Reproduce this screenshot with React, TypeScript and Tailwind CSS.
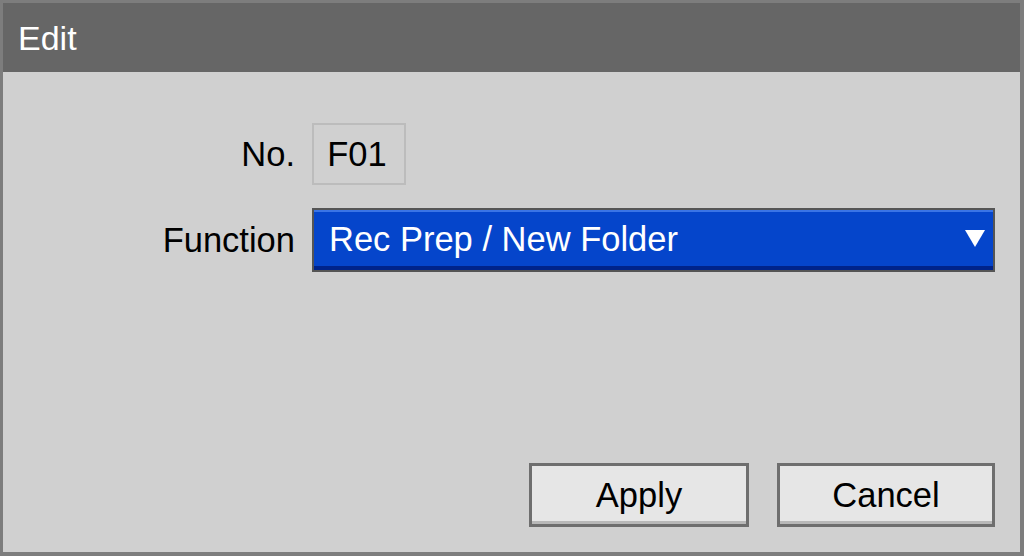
export default function App() {
  return (
    <div
      className="w-[1024px] h-[556px] flex flex-col bg-[#d0d0d0] border-t-[3px] border-l-[3px] border-r-4 border-b-4 border-[#7d7d7d] text-[34.5px] leading-none text-black"
      style={{ fontFamily: '"Liberation Sans", Arial, sans-serif' }}
    >
      <div className="h-[69px] flex items-center pl-[15px] bg-[#666666] text-white text-[34px]">Edit</div>

      <div className="flex-1 flex flex-col pt-[51px] pr-[25px] pb-[25px]">
        <div className="flex items-center h-[62px]">
          <div className="w-[292px] text-right">No.</div>
          <div className="ml-[17px] w-[94px] h-[62px] flex items-center justify-center border-2 border-[#bcbcbc] pr-[4px]">
            F01
          </div>
        </div>

        <div className="flex items-center h-[64px] mt-[23px]">
          <div className="w-[292px] text-right">Function</div>
          <div className="ml-[17px] flex-1 h-[64px] border-2 border-[#555555] bg-[#0545cb] flex flex-col">
            <div className="h-[2px] bg-[#3a74e6]" />
            <div className="flex-1 flex items-center justify-between pl-[15px] pr-[8px] text-white">
              <span>Rec Prep / New Folder</span>
              <svg width="20" height="18" viewBox="0 0 20 18">
                <path d="M0 0 H20 L10 17 Z" fill="#ffffff" />
              </svg>
            </div>
            <div className="h-[4px] bg-[#00238a]" />
          </div>
        </div>

        <div className="mt-auto flex justify-end gap-[28px]">
          <button className="w-[220px] h-[64px] border-[3px] border-[#6e6e6e] bg-[#e6e6e6] shadow-[inset_0_-3px_0_#b8b8b8] flex items-center justify-center">
            Apply
          </button>
          <button className="w-[218px] h-[64px] border-[3px] border-[#6e6e6e] bg-[#e6e6e6] shadow-[inset_0_-3px_0_#b8b8b8] flex items-center justify-center">
            Cancel
          </button>
        </div>
      </div>
    </div>
  )
}
